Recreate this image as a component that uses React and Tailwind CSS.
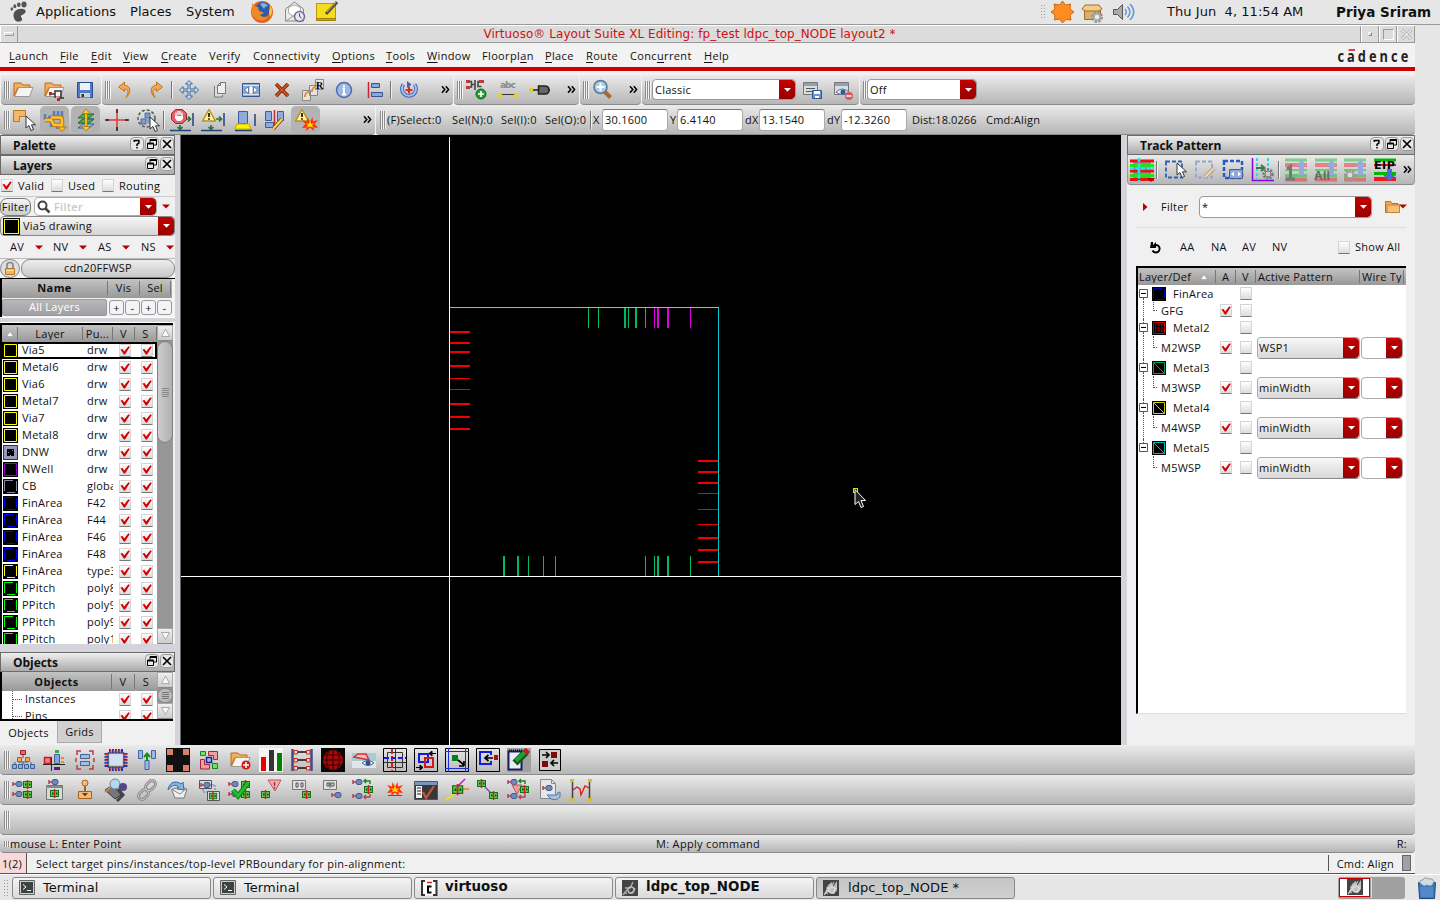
import React from "react";

/* ---------- small building blocks ---------- */

const Svg = ({ w = 24, h = 24, vb, className = "", children }) => (
  <svg width={w} height={h} viewBox={vb || `0 0 ${w} ${h}`} className={`block shrink-0 ${className}`} fill="none">
    {children}
  </svg>
);

const Grip = ({ className = "h-[18px]" }) => (
  <div className={`flex shrink-0 ${className}`}>
    <div className="w-[2px] border-r border-[#f4f4f4] bg-[#8c8c8c]" />
    <div className="w-[2px] border-r border-[#f4f4f4] bg-[#8c8c8c]" />
    <div className="w-[2px] border-r border-[#f4f4f4] bg-[#8c8c8c]" />
  </div>
);

const Slot = ({ children, pressed, className = "w-[31px]" }) => (
  <div className={`flex h-full shrink-0 items-center justify-center ${className}`}>
    {pressed ? (
      <div className="flex h-[28px] w-[29px] items-center justify-center rounded-[5px] bg-[#b3b3b3]">{children}</div>
    ) : (
      children
    )}
  </div>
);

const Sep = ({ className = "" }) => <div className={`h-[18px] w-[2px] shrink-0 border-r border-[#eee] bg-[#777] ${className}`} />;

const More = ({ className = "" }) => (
  <Svg w={9} h={9} className={className}>
    <path d="M1 1.2 3.8 4.5 1 7.8M4.8 1.2 7.6 4.5 4.8 7.8" stroke="#000" strokeWidth="1.5" />
  </Svg>
);

const Bar = ({ className = "", children }) => (
  <div
    className={`flex shrink-0 items-center rounded-b-[4px] border-b border-[#8a8a8a] bg-gradient-to-b from-[#ebebeb] to-[#b6b6b6] ${className}`}
  >
    {children}
  </div>
);

const RedDrop = ({ className = "w-4" }) => (
  <div className={`flex h-full shrink-0 items-center justify-center rounded-r-[4px] bg-gradient-to-b from-[#c40000] to-[#980000] ${className}`}>
    <Svg w={9} h={6}>
      <path d="M1 1h7L4.5 4.8z" fill="#fff" />
    </Svg>
  </div>
);

const RedTri = () => (
  <Svg w={8} h={5}>
    <path d="M0 .5h8L4 4.5z" fill="#b80000" />
  </Svg>
);

const Combo = ({ text, className = "", dropClass }) => (
  <div className={`flex shrink-0 items-center justify-between overflow-hidden rounded-[4px] border border-[#9a9a9a] ${className}`}>
    <span className="pl-[2px]">{text}</span>
    <RedDrop className={dropClass} />
  </div>
);

const Check = ({ on }) => (
  <div className="h-[13px] w-[12px] shrink-0 rounded-[1px] border border-[#d4d4d4] border-b-[#777] bg-gradient-to-b from-white to-[#dcdcdc]">
    {on && (
      <Svg w={10} h={11}>
        <path d="M.5 4.5 2.5 4l1.7 2.6L8.4 1.2 9.8 2 5 9.600H3.8z" fill="#d40000" />
      </Svg>
    )}
  </div>
);

const TitleBtn = ({ kind }) => (
  <div className="flex h-[14px] w-[14px] items-center justify-center rounded-[4px] border border-[#999] bg-[#e8e8e8]">
    <Svg w={12} h={12}>
      {kind === "help" && (
        <g stroke="#000" strokeWidth="1.5">
          <path d="M3.300 4V2.500h4.600v2.600L6 6.400V8" />
          <path d="M6 9v1.500" />
        </g>
      )}
      {kind === "float" && (
        <g stroke="#000">
          <path d="M4 4.500V1.500h6.500v5.500H8" />
          <path d="M4 2h6.500M1.500 5.500h6" strokeWidth="2" />
          <path d="M1.500 5v5.500h6V5" />
        </g>
      )}
      {kind === "close" && <path d="M2 2l8 8M10 2l-8 8" stroke="#000" strokeWidth="1.700" />}
    </Svg>
  </div>
);

const DockTitle = ({ text, help }) => (
  <div className="flex h-5 shrink-0 items-center border border-[#6b6b6b] bg-gradient-to-b from-[#f0f0f0] to-[#ababab] pl-3">
    <span className="grow pt-px text-[12px] font-bold tracking-[-0.050px]">{text}</span>
    <div className="-mt-[3px] flex gap-[1px]">
      {help && <TitleBtn kind="help" />}
      <TitleBtn kind="float" />
      <TitleBtn kind="close" />
    </div>
  </div>
);

/* ---------- icon pieces ---------- */

const Folder = ({ children }) => (
  <Svg>
    <path d="M3 18V5h7l2 2h7v3" fill="#f0b060" stroke="#c06a18" />
    <path d="M3.500 18.500 7.500 9.500H22l-3.500 9z" fill="#f6f4f0" stroke="#999" />
    <path d="M3 18 7 9.500" stroke="#d07a20" strokeWidth="1.500" />
    {children}
  </Svg>
);
const Floppy = ({ w = 24 }) => (
  <Svg w={w} h={w} vb="0 0 24 24">
    <path d="M4.500 4.500h15v15h-15z" fill="#4f7cc8" stroke="#274b94" />
    <path d="M7 5h10v7H7z" fill="#eef2f8" />
    <path d="M7 15h10v4.500H7z" fill="#ccd4e0" />
    <path d="M8.500 16h2.500v3H8.500z" fill="#333" />
  </Svg>
);
const Cursor = ({ x = 12, y = 9 }) => (
  <path transform={`translate(${x} ${y})`} d="M0 0v12l3-2.500 2 5 2.500-1-2-4.700h4z" fill="#fff" stroke="#333" />
);
const Pin = ({ x, y }) => (
  <g transform={`translate(${x} ${y})`}>
    <path d="M0 1v4M0 3h3" stroke="#b84050" strokeWidth="1.500" />
    <rect x="3" y=".5" width="6" height="5" rx="2" fill="#7088b8" stroke="#44598a" />
  </g>
);
const Cell = ({ x, y, s = 1 }) => (
  <g transform={`translate(${x} ${y}) scale(${s})`}>
    <rect x=".5" y="1.500" width="8" height="6" fill="#58d048" stroke="#157018" />
    <path d="M4.500 0v9" stroke="#d02020" strokeWidth="1.500" />
    <path d="M2 4.500h1.500M6 4.500h1.500" stroke="#105010" strokeWidth="2" />
  </g>
);
const Warn = ({ x = 0, y = 0 }) => (
  <g transform={`translate(${x} ${y})`}>
    <path d="M8 1.500 14.500 13h-13z" fill="#fff0a0" stroke="#b99018" strokeWidth="1.500" strokeLinejoin="round" />
    <path d="M8 5v4M8 10.200v1.600" stroke="#111" strokeWidth="1.700" />
  </g>
);
const Burst = ({ x = 0, y = 0 }) => (
  <g transform={`translate(${x} ${y})`}>
    <path d="M8 6 5.500 1 5 5.500 0 4l3.500 4L0 12l4.500-.500L4 15l4-3.500 4 3.500-.500-3.500L16 12l-3.500-4L16 4l-5 1.500L10.500 1z" fill="#ff3000" />
    <path d="M8 7 7 5v3L4 7l2 2.500-2 2 4-1 4 1-2-2L12 7 9 8V5z" fill="#ffd800" />
  </g>
);

/* ---------- toolbar icons ---------- */

const I = {
  open: <Folder />,
  openPin: (
    <Folder>
      <path d="M9 16h4v-3h6v7M13 13v7M17 20h5M8 14.500v3" stroke="#333" strokeWidth="1.500" />
      <path d="M7 14h3v3H7zM15 20h3v3h-3z" fill="#cc2020" />
    </Folder>
  ),
  save: <Floppy />,
  undo: (
    <Svg>
      <path d="m11.500 4-6 5 6 4.500V11c4 0 4.500 3 1.500 8.500C18.500 15 18 7.500 11.500 7.200z" fill="#f0a858" stroke="#c47418" />
    </Svg>
  ),
  redo: (
    <Svg>
      <path d="m12.500 4 6 5-6 4.500V11c-4 0-4.500 3-1.500 8.500C5.500 15 6 7.500 12.500 7.200z" fill="#f0a858" stroke="#c47418" />
    </Svg>
  ),
  move: (
    <Svg>
      <path
        d="M12 2.500 15.500 6H13v5h5V8.500l3.500 3.500-3.500 3.500V13h-5v5h2.500L12 21.500 8.500 18H11v-5H6v2.500L2.500 12 6 8.500V11h5V6H8.500z"
        fill="#c8dcf0"
        stroke="#3d6b9c"
      />
    </Svg>
  ),
  copy: (
    <Svg>
      <path d="M6.500 8v11h8v-2" stroke="#777" fill="#ddd" />
      <path d="M12.500 4.500h5v11h-8v-8z" fill="#eee" stroke="#777" />
      <path d="M9.500 7.500h3v-3" stroke="#777" />
    </Svg>
  ),
  stretch: (
    <Svg>
      <path d="M3.500 5.500h17v13h-17z" fill="#8ba9d8" stroke="#36568f" />
      <path d="M4 7.500h16M4 16.500h16" stroke="#dbe6f5" />
      <path d="M5.500 12 9.500 8.500v7zM18.500 12l-4-3.500v7z" fill="#fff" stroke="#36568f" strokeWidth=".7" />
      <rect x="10.500" y="8.500" width="3" height="7" fill="#fff" />
    </Svg>
  ),
  del: (
    <Svg>
      <path d="m6 6 12 12M18 6 6 18" stroke="#7c2408" strokeWidth="3.600" />
      <path d="m6 6 12 12M18 6 6 18" stroke="#d8581c" strokeWidth="1.700" />
    </Svg>
  ),
  copies: (
    <Svg>
      <path d="M1.500 12.500h8v10h-8zM8.500 7.500h8v10h-8zM14.500 1.500h8v10h-8z" fill="#e4e4e4" stroke="#888" />
      <path d="M4 19c0-4 1-5 4-5M11 14c0-4 1-5 4-5" stroke="#e08c38" strokeWidth="2" />
      <text x="15" y="10.500" fontSize="10" fontWeight="700" fill="#000" fontFamily="Liberation Serif">R</text>
    </Svg>
  ),
  info: (
    <Svg>
      <circle cx="12" cy="12" r="7.500" fill="#9db8e2" stroke="#4d6fae" strokeWidth="1.500" />
      <path d="M12 7v2M10.500 10.500H12v6M10 16.500h4" stroke="#fff" strokeWidth="2" />
    </Svg>
  ),
  align: (
    <Svg>
      <path d="M5.500 4v16" stroke="#d02030" strokeWidth="1.500" />
      <path d="M8.500 5.500h8v4h-8zM8.500 14.500h11v4h-11z" fill="#87a8dc" stroke="#34548f" />
    </Svg>
  ),
  rotate: (
    <Svg>
      <path d="M6.500 6.500a7 7 0 1 0 11 0" stroke="#3f66b0" strokeWidth="4" />
      <path d="M6.500 6.500a7 7 0 1 0 11 0" stroke="#a3c0ea" strokeWidth="2" />
      <path d="m10 3 4.500 3.500L10 10z" fill="#3f66b0" />
      <path d="M12 8.500v7M8.500 12h7" stroke="#e02828" strokeWidth="2" />
    </Svg>
  ),
  nets: (
    <Svg>
      <path d="M4 3.500h3.500V9H4M7.500 6.500H11M11 2v10M17.500 3.500H14v5h3.500" stroke="#444" strokeWidth="1.600" />
      <path d="M2 2h4v3H2zM2 8h4v3H2zM15 2h5v3h-5z" fill="#c03838" />
      <circle cx="17" cy="16" r="5" fill="#20a030" stroke="#0a6a18" />
      <path d="M17 13v6M14 16h6" stroke="#fff" strokeWidth="1.700" />
    </Svg>
  ),
  label: (
    <Svg>
      <text x="4" y="10" fontSize="9" fontWeight="700" fill="#888" fontFamily="DejaVu Sans" textLength="16">abc</text>
      <path d="M4 16.500h17" stroke="#333" />
      <path d="M2 15h4v4H2zM18 15h4v4h-4z" fill="#e8d020" />
    </Svg>
  ),
  plug: (
    <Svg>
      <path d="M2 12h10M18 12h4" stroke="#222" strokeWidth="1.500" />
      <path d="M1 10h4v4H1z" fill="#e8d020" />
      <path d="M10.500 8H17q4 0 4 4t-4 4h-6.500z" fill="#666" stroke="#222" strokeWidth="1.500" />
    </Svg>
  ),
  zoomIn: (
    <Svg>
      <path d="m13.500 13.500 6 6" stroke="#b06a20" strokeWidth="4" />
      <circle cx="9.500" cy="9" r="6.500" fill="#a8cce8" stroke="#5c7894" strokeWidth="1.500" />
      <path d="M9.500 5v8M5.500 9h8" stroke="#fff" strokeWidth="2" />
    </Svg>
  ),
  saveView: (
    <Svg>
      <path d="M3.500 4.500h14v12h-14z" fill="#ddd" stroke="#777" />
      <path d="M4 6.500h13" stroke="#8da4b8" strokeWidth="3" />
      <path d="M6 10.500h9M6 13.500h6" stroke="#555" />
      <path d="M12.500 12.500h9v8h-9z" fill="#6a94d0" stroke="#345590" />
      <path d="M14 13h6v3h-6zM15 18h4v2h-4z" fill="#fff" />
    </Svg>
  ),
  hideView: (
    <Svg>
      <path d="M3.500 4.500h14v12h-14z" fill="#ddd" stroke="#777" />
      <path d="M4 6.500h13" stroke="#8da4b8" strokeWidth="3" />
      <path d="M5 14q6-6 13 0-7 5-13 0z" fill="#dfe8f5" stroke="#5878a8" />
      <circle cx="12" cy="14" r="2.500" fill="#35588f" />
      <circle cx="18" cy="18" r="4" fill="#dc5858" />
      <path d="M15.500 18h5" stroke="#fff" strokeWidth="1.500" />
    </Svg>
  ),
  partial: (
    <Svg>
      <path d="M1.500 2.500h12v6h-6v5h-6z" fill="#f4b868" stroke="#b87820" />
      <Cursor x={14} y={8} />
    </Svg>
  ),
  route: (
    <Svg>
      <path d="M2 6v6M5 9h14M11 3v9M15 3v9M19 3v7M8 12v7M14 16v5" stroke="#5a7cc0" strokeWidth="2.500" />
      <path d="M2 12h6l3 5h7v4" stroke="#b07808" strokeWidth="4.500" />
      <path d="M8 9.500h9q2 0 2 3v8" stroke="#b07808" strokeWidth="4.500" />
      <path d="M8 9.500h9q2 0 2 3v8" stroke="#ffc038" strokeWidth="2.500" />
      <path d="M2 12h6l3 5h7v4" stroke="#ffc038" strokeWidth="2.500" />
      <path d="M14.500 19h9L19 23.500z" fill="#ffb820" stroke="#b07808" />
    </Svg>
  ),
  layersUp: (
    <Svg>
      <path d="M4 20l5-4h11l-5 4zM4 15l5-4h11l-5 4z" fill="#9cc0ee" stroke="#2f5c9c" />
      <path d="M4 15l5-4h11l-5 4zM4 10l5-4h11l-5 4z" fill="#58a850" stroke="#1d6e30" />
      <path d="M12 4v16" stroke="#a87800" strokeWidth="3" />
      <path d="M12 4v16" stroke="#ffd030" strokeWidth="1.500" />
      <path d="m12 1 4 4.500H8zM12 23l4-4.500H8z" fill="#ffc830" stroke="#a87800" strokeWidth=".8" />
    </Svg>
  ),
  cross: (
    <Svg>
      <path d="M12 2v20M1 12h22" stroke="#e03838" strokeWidth="1.500" />
      <path d="M12 1v4M12 19v4M0 12h4M20 12h4" stroke="#222" strokeWidth="1.500" />
    </Svg>
  ),
  areaSel: (
    <Svg>
      <circle cx="10.500" cy="10.500" r="8.500" stroke="#555" strokeWidth="1.500" strokeDasharray="3 2" />
      <path d="M9 5h5v5H9zM5 11h5v5H5z" fill="#7d9dcc" stroke="#3a5c98" strokeWidth=".8" />
      <circle cx="14" cy="13" r="3" fill="#7d9dcc" />
      <Cursor x={14} y={9} />
    </Svg>
  ),
  stop: (
    <Svg>
      <path d="M15 11h5m-2-2.500 2.500 2.500-2.500 2.500M10 17v4m-2.500-2 2.500 2.500 2.500-2.500" stroke="#287838" strokeWidth="1.700" />
      <path d="M23 5v13M0 22.500h21" stroke="#24427a" strokeWidth="1.500" />
      <path d="M5.500 1.500h7l4 4v6l-4 4h-7l-4-4v-6z" fill="#e06068" stroke="#a82028" />
      <path d="M6 8V4.500M8 7V3M10 7V3M12 8V4.500" stroke="#fff" strokeWidth="1.300" />
      <path d="M5 8h8v2.500L11 13H7L5 10z" fill="#fff" />
    </Svg>
  ),
  warnPins: (
    <Svg>
      <path d="M15 11h5m-2-2.500 2.500 2.500-2.500 2.500M10 17v4m-2.500-2 2.500 2.500 2.500-2.500" stroke="#287838" strokeWidth="1.700" />
      <path d="M23 5v13M0 22.500h21" stroke="#24427a" strokeWidth="1.500" />
      <Warn />
    </Svg>
  ),
  highlight: (
    <Svg>
      <path d="M6.500 3.500h9v12h-9z" fill="#8fabdc" stroke="#3a5ea0" />
      <path d="M5 16h12l2 5H3z" fill="#fff200" stroke="#c8a800" />
      <path d="M3 22.500h17M23 6v12" stroke="#24427a" strokeWidth="1.500" />
    </Svg>
  ),
  editBars: (
    <Svg>
      <path d="M2.500 3.500h6v9h-6zM14.500 3.500h6v9h-6zM2.500 14.500h8v5h-8z" fill="#8fabdc" stroke="#3a5ea0" />
      <path d="M11.500 2v16" stroke="#c82838" strokeWidth="1.500" />
      <path d="m10 21 9-10" stroke="#7a4d10" strokeWidth="4" />
      <path d="m10 21 9-10" stroke="#ffd860" strokeWidth="2" />
    </Svg>
  ),
  warnBurst: (
    <Svg>
      <Warn />
      <Burst x={8} y={8} />
    </Svg>
  ),
};

/* lower toolbars */
const B1 = [
  <Svg>
    <path d="M12 7v3M7 12v2h10v-2M4 16v-2M12 14v3M20 17v-3" stroke="#555" />
    <path d="M9.500 2.500h5v4h-5z" fill="#e86868" stroke="#a02020" />
    <path d="M6.500 9.500h4v4h-4zM14.500 9.500h4v4h-4z" fill="#f0a868" stroke="#a86020" />
    <path d="M1.500 16.500h4v4h-4zM7.500 16.500h4v4h-4zM13.500 16.500h4v4h-4zM19.500 16.500h4v4h-4z" fill="#90aedc" stroke="#3f5f98" />
  </Svg>,
  <Svg>
    <path d="M1 16.500h22M9.500 9v14" stroke="#222" />
    <path d="M2.500 9.500h6v6h-6z" fill="#f08080" stroke="#c02020" strokeWidth="1.500" />
    <path d="M12.500 6.500h5v9h-5z" fill="#88a4d4" stroke="#44609c" />
    <path d="M13 2h4v3h-4z" fill="#30b040" />
    <path d="M19 9h3v2h-3zM19 13h3v2h-3z" fill="#e89020" />
    <path d="M12 19h6v3h-6z" fill="#601098" />
  </Svg>,
  <Svg>
    <path d="M4 7V3h4M16 3h4v4M20 17v4h-4M8 21H4v-4M3 10v4M21 10v4" stroke="#c03848" strokeWidth="1.500" />
    <path d="M7.500 6.500h9v4h-9zM7.500 13.500h9v4h-9z" fill="#a5bce2" stroke="#44609c" />
  </Svg>,
  <Svg>
    <rect x="4" y="5" width="16" height="14" stroke="#222" />
    <rect x="6" y="7" width="12" height="10" fill="#d2e0f4" />
    <path d="M5 3h14M5 21h14" stroke="#2038b0" strokeWidth="4" strokeDasharray="2 1" />
    <path d="M2.500 5v14M21.500 5v14" stroke="#2038b0" strokeWidth="4" strokeDasharray="2 1" />
    <path d="M6 3h12M6 21h12M2.500 6v12M21.500 6v12" stroke="#e83838" strokeWidth="2.500" strokeDasharray="1.500 1.500" />
  </Svg>,
  <Svg>
    <path d="M3.500 2.500h4v8h-4zM16.500 2.500h4v8h-4zM10 12.500h4v9h-4z" fill="#9db8e4" stroke="#3f63a8" />
    <path d="M12 13V6m-3 3 3-3.500L15 9" stroke="#159020" strokeWidth="2" />
  </Svg>,
  <Svg>
    <path d="M0 0h24v24H0z" fill="#111" />
    <path d="M1 1h6v6H1zM17 1h6v6h-6zM1 17h6v6H1zM17 17h6v6h-6z" fill="#d87f68" />
  </Svg>,
  <Svg>
    <path d="M3.500 3.500h5v4h-5z" fill="#70e060" stroke="#208020" />
    <path d="M15.500 15.500h5v5h-5z" fill="#70e060" stroke="#208020" />
    <path d="M11.500 3.500h9v8h-4v-4h-5zM3.500 11.500h4v5h5v4.500h-9z" fill="#e8a0a0" stroke="#b02038" />
    <path d="M9.500 9.500h5v5h-5z" fill="#a8b8f0" stroke="#182090" strokeWidth="1.500" />
  </Svg>,
  <Folder>
    <circle cx="18" cy="17" r="4.500" fill="#d01818" />
    <path d="M18 14v6M15 17h6" stroke="#fff" strokeWidth="1.500" />
  </Folder>,
  <Svg>
    <path d="M0 0h24v24H0z" fill="#f4f4f4" />
    <path d="M2 9h5v14H2z" fill="#e80000" />
    <path d="M10 2h5v21h-5z" fill="#333" />
    <path d="M18 5h5v18h-5z" fill="#008000" />
  </Svg>,
  <Svg>
    <path d="M2.500 1v22M21.500 1v22" stroke="#3c4c90" strokeWidth="2.500" />
    <path d="M5 4h14M5 12h14M5 20h14" stroke="#111" strokeWidth="1.500" />
    <path d="M4 2.500h3.500v3.500H4zM4 10.500h3.500v3.500H4zM4 18.500h3.500v3.500H4zM16.500 2.500h3.500v3.500h-3.500zM16.500 10.500h3.500v3.500h-3.500zM16.500 18.500h3.500v3.500h-3.500z" fill="#f8d8c8" stroke="#d02818" />
  </Svg>,
  <Svg>
    <path d="M0 0h24v24H0z" fill="#080808" />
    <circle cx="12" cy="12" r="10" fill="#a80808" />
    <path d="M2 12h20M3.500 7h17M3.500 17h17M12 2v20M8 2.500Q3 12 8 21.500M16 2.500q5 9.500 0 19" stroke="#300" />
  </Svg>,
  <Svg>
    <path d="M0 5h24v15H0z" fill="#a8ccd6" />
    <path d="M0 13h24v7H0z" fill="#dfe8e6" />
    <path d="M6 6h8l3 6L2 9z" stroke="#d83030" strokeWidth="1.500" fill="#f0c0c0" />
    <path d="M10 15q6-5 12 0-6 5-12 0z" fill="#f2f6fb" stroke="#456898" />
    <circle cx="16" cy="15" r="2.500" fill="#2f4f90" />
  </Svg>,
  <Svg>
    <path d="M.5.5h23v23H.5z" stroke="#000" />
    <path d="M4.500 4.500h15v15h-15zM12.500 1v22M1 14.500h22" stroke="#333" />
    <path d="M9 1v22" stroke="#e01818" strokeWidth="2" strokeDasharray="5 2" />
    <path d="M1 10h22" stroke="#1818e0" strokeWidth="2" strokeDasharray="5 2" />
  </Svg>,
  <Svg>
    <path d="M.5.5h23v23H.5z" stroke="#000" />
    <path d="M5 6h9v8H5z" stroke="#1818d0" strokeWidth="2" />
    <path d="M11 10h8v9h-8z" stroke="#d01818" strokeWidth="2" />
    <path d="M15 5.500h7m-7 0 3-2.500v5zM2 19.500h7m0 0-3-2.500v5z" stroke="#000" fill="#000" />
  </Svg>,
  <Svg>
    <path d="M.5.5h23v23H.5z" stroke="#000" />
    <path d="M3.500 0v24M20.500 0v24M0 3.500h24M0 20.500h24" stroke="#2030d0" />
    <path d="M7 7h6v6H7z" fill="#008020" />
    <path d="m13 12 6 5m0 1h-5m5 0v-5" stroke="#000" strokeWidth="1.700" />
  </Svg>,
  <Svg>
    <path d="M.5.5h23v23H.5z" stroke="#000" />
    <path d="M15 7V4H4v12h11v-3" stroke="#1020d8" strokeWidth="2" />
    <path d="M9 10h8M12.500 7 9 10l3.500 3" stroke="#000" strokeWidth="1.700" />
    <path d="M18 7h4v5h-4z" fill="#c00810" />
  </Svg>,
  <Svg>
    <path d="M0 0h24v24H0z" fill="#a0a0a0" />
    <path d="M1.500 3.500h13v18h-13z" fill="#e8eef4" stroke="#18205c" strokeWidth="2" />
    <path d="M2 2.500h13" stroke="#111" strokeWidth="2" strokeDasharray="1 1" />
    <path d="m8 15 11-11" stroke="#0a5a18" strokeWidth="7" />
    <path d="m9 13 9-9" stroke="#22a038" strokeWidth="4" />
    <path d="m18 5 3-3" stroke="#d01818" strokeWidth="6" />
  </Svg>,
  <Svg>
    <path d="M1.500 1.500h21v21h-21z" stroke="#000" fill="#ccc" />
    <path d="M13 4h6v6h-6zM4 13h6v6H4z" fill="#7c0a0a" />
    <path d="M4 7h7M8 4l3 3-3 3M20 15h-7m3-3-3 3 3 3" stroke="#000" strokeWidth="1.600" />
  </Svg>,
];

const B2 = [
  <Svg><Pin x={2} y={3} /><Pin x={2} y={13} /><Cell x={12} y={2} /><Cell x={12} y={12} /></Svg>,
  <Svg><path d="M4.500 7.500h16v14h-16z" fill="#d8d8d8" stroke="#777" /><path d="M4 9h16" stroke="#888" strokeWidth="2" /><Pin x={7} y={1} /><Cell x={8} y={11} /></Svg>,
  <Svg><circle cx="12" cy="5" r="3" fill="#f4c080" stroke="#a86020" /><path d="M12 8v5" stroke="#a86020" strokeWidth="2" /><path d="M5.500 13.500h13v7h-13z" fill="#f2bc78" stroke="#a86020" /><path d="M9 15h6l-3 3.500z" fill="#704008" /></Svg>,
  <Svg><path d="m1 12 8-5 8 10-6 4z" fill="#777" stroke="#333" /><path d="m14 11 5 6-6 6" stroke="#444" strokeWidth="3" /><circle cx="11" cy="6" r="5" fill="#b8d8f0" stroke="#6888a8" /><circle cx="19" cy="9" r="4" fill="#504888" /><path d="m1 14 6-5" stroke="#c08848" strokeWidth="2" /></Svg>,
  <Svg><g stroke="#888" strokeWidth="3"><rect x="10" y="4" width="11" height="7" rx="3.500" transform="rotate(-45 15.500 7.500)" /><rect x="3" y="13" width="11" height="7" rx="3.500" transform="rotate(-45 8.500 16.500)" /></g><g stroke="#c4c4c4"><rect x="10" y="4" width="11" height="7" rx="3.500" transform="rotate(-45 15.500 7.500)" /><rect x="3" y="13" width="11" height="7" rx="3.500" transform="rotate(-45 8.500 16.500)" /></g></Svg>,
  <Svg><path d="M5.500 11.500 16 8.500l5 3-3 8.500H9z" fill="#eee" stroke="#777" /><path d="m6 11.500 8 4.500 6-5" stroke="#888" /><path d="M2 12C3 4 10 2 15 6l2-2 1 8-7-1 2-2C9 6 6 7 2 12z" fill="#88b4e4" stroke="#3a6ca8" /></Svg>,
  <Svg><path d="M2.500 2.500h12v8h-12z" fill="#d5dbe5" stroke="#555" /><path d="M6 11v3h11v7M9 7h9v7" stroke="#6080a8" strokeDasharray="2 1" /><Pin x={4} y={4} /><path d="M10.500 13.500h12v9h-12z" stroke="#555" fill="#d5dbe5" /><Cell x={12} y={14} s={0.9} /></Svg>,
  <Svg><Pin x={1} y={3} /><Pin x={1} y={13} /><Cell x={13} y={2} /><Cell x={13} y={12} /><path d="m5 12 5 6L20 5" stroke="#0c7a10" strokeWidth="5" /><path d="m5 12 5 6L20 5" stroke="#20c028" strokeWidth="3" /></Svg>,
  <Svg><path d="M9 2h13l-6 11z" fill="#f0b0b0" stroke="#c05058" /><path d="M15.500 4v4M15.500 9v1.500" stroke="#b03038" strokeWidth="1.500" /><Cell x={2} y={12} /></Svg>,
  <Svg><path d="M2.500 2.500h13v9h-13z" fill="#e0e0e0" stroke="#777" /><path d="M6 5h2v4H6zM11 5h2v4h-2z" stroke="#555" /><Cell x={12} y={12} /></Svg>,
  <Svg><path d="M2.500 2.500h13v9h-13z" fill="#e0e0e0" stroke="#777" /><path d="M9 4v6M6 5h2v3H6zM10 5h3v3h-3z" stroke="#555" /><Pin x={11} y={14} /></Svg>,
  <Svg><Pin x={1} y={1} /><Pin x={1} y={15} /><Cell x={12} y={7} /><path d="M18 6V3h-6m2-2-2 2 2 2" stroke="#1c8028" strokeWidth="1.400" /><path d="M18 16v3h-6m2-2-2 2 2 2" stroke="#b84050" strokeWidth="1.400" /></Svg>,
  <Svg><path d="M5 17.500h14" stroke="#555" /><Burst x={4} y={3} /></Svg>,
  <Svg><path d="M.5 3.500h23v18H.5z" fill="#383838" stroke="#555" /><path d="M1 4h22v3H1z" fill="#7898c0" /><path d="M2 8h6v12H2z" fill="#f0f0f0" /><path d="M3 10h4M3 13h4M3 16h4" stroke="#222" /><path d="m9 14 3 6 8-12" stroke="#c85838" strokeWidth="2.200" /></Svg>,
  <Svg><path d="m12 9 8-8" stroke="#c010d0" strokeWidth="1.500" /><path d="m10 15-9 7" stroke="#f0e010" strokeWidth="2" /><path d="M17 11h7" stroke="#f08020" strokeWidth="1.500" /><Cell x={7} y={6} s={1.250} /></Svg>,
  <Svg><path d="m9 9 8 8" stroke="#9040b0" strokeWidth="1.500" /><Cell x={1} y={1} /><Cell x={13} y={13} /></Svg>,
  <Svg><Pin x={1} y={1} /><Pin x={1} y={15} /><path d="M5 7h10l-5 9z" fill="#e8a0a0" stroke="#c05058" /><Cell x={13} y={7} /><path d="M18 6V3h-6m2-2-2 2 2 2" stroke="#1c8028" strokeWidth="1.400" /><path d="M18 16v3h-6m2-2-2 2 2 2" stroke="#b84050" strokeWidth="1.400" /></Svg>,
  <Svg><path d="M2.500 1.500h11l4 4v15h-15z" fill="#e4e6ea" stroke="#888" /><path d="M13.500 1.500v4h4" stroke="#888" /><Pin x={5} y={7} /><path d="M9 17h10q0-3 3-3v5q-3 4-9 2z" fill="#a8c0e0" stroke="#5878a8" /></Svg>,
  <Svg><path d="M3.500 2v20M20.500 2v20" stroke="#444" strokeWidth="1.500" /><path d="m4 12 4-3 3 2 1 6 4-9 4 2" stroke="#e01818" strokeWidth="1.300" /><path d="M1 1h4v3H1zM19 1h4v3h-4zM1 20h4v3H1zM19 20h4v3h-4z" fill="#d8c020" /></Svg>,
];

/* ---------- top desktop panel ---------- */

const DesktopPanel = () => (
  <div className="flex h-[25px] shrink-0 items-center border-b border-[#999] bg-[#e6e6e6] font-['DejaVu_Sans',sans-serif] text-[13px] tracking-[0.050px]">
    <div className="flex w-9 shrink-0 pl-[9px]">
      <Svg w={20} h={22}>
        <ellipse cx="15" cy="3.500" rx="2.600" ry="3" fill="#555" />
        <ellipse cx="9.800" cy="3.800" rx="1.800" ry="2.200" fill="#555" />
        <ellipse cx="5.800" cy="5.300" rx="1.500" ry="2" fill="#555" />
        <ellipse cx="2.800" cy="8" rx="1.300" ry="1.700" fill="#555" />
        <path d="M14 8c5 1 2 5-1 6s1 3 0 5-7 3-8-2C3 12 7 7 14 8z" fill="#4c5050" />
      </Svg>
    </div>
    <span className="w-[94px] shrink-0 pb-px">Applications</span>
    <span className="w-[56px] shrink-0 pb-px">Places</span>
    <span className="w-[64px] shrink-0 pb-px">System</span>
    <Svg>
      <circle cx="12" cy="12" r="11" fill="#e0641c" />
      <circle cx="13" cy="9.500" r="7.500" fill="#2c5ca8" />
      <path d="M10 4q5-3 8 2-3 0-4 3z" fill="#78b4e4" />
      <path d="M2 6q-2 9 4 13 8 4 13-3-5 3-9-1l4-2q-3-2-5-2l-1-4Q4 7 2 3z" fill="#f08828" />
      <path d="M20 5q4 6 0 12l-1-4z" fill="#ffc840" />
    </Svg>
    <div className="w-2" />
    <Svg>
      <path d="M3.500 21V9l9-7 9 7v12z" fill="#e8ebe8" stroke="#888" />
      <path d="M6.500 13V7.500l6-2.500 6 2.500V13l-6 4z" fill="#fff" stroke="#aaa" />
      <path d="m4 21 8.500-6 9 6" stroke="#999" />
      <circle cx="17.500" cy="16.500" r="5" fill="#ece4f4" stroke="#7c6894" strokeWidth="1.500" />
      <path d="M17.500 13.500v3l2 1.500" stroke="#444" />
    </Svg>
    <div className="w-2" />
    <Svg>
      <path d="M2.500 3.500h19v15h-19z" fill="#f4dc20" stroke="#b89808" />
      <path d="M2.500 18.500h19v2h-19z" fill="#c8a810" stroke="#9c8008" />
      <path d="m12 14 11-12" stroke="#604c30" strokeWidth="3" />
      <path d="m13 12 9-10" stroke="#c8b088" strokeWidth="1" />
    </Svg>
    <div className="grow" />
    <div className="mr-[5px] h-4 w-[6px] bg-[radial-gradient(circle,#999_1px,transparent_1px)] bg-[size:3px_3px]" />
    <Svg w={23} h={22} className="mr-[7px]">
      <path d="m11.500 0 3 4 5-1-.500 5 4 3-4 3 1 5-5-.500-3.500 3.500-3-4-5 1 .500-5L0 11l4-3-1-5 5.500 1z" fill="#ff8c20" stroke="#d06810" />
    </Svg>
    <Svg w={24} h={22} className="mr-[6px]">
      <path d="M3.500 8.500h16v10h-16z" fill="#dcb068" stroke="#98702c" />
      <path d="m1 8 3-4h14l3 4-3 2H4z" fill="#f0cc88" stroke="#98702c" />
      <circle cx="16" cy="16" r="4.500" stroke="#909090" strokeWidth="3" strokeDasharray="2.200 1.300" />
      <circle cx="16" cy="16" r="3.200" stroke="#aaa" strokeWidth="2" fill="#eee" />
    </Svg>
    <Svg w={24} h={22} className="mr-[32px]">
      <path d="M2.500 8.500h4l5-5v15l-5-5h-4z" fill="#aaa" stroke="#555" />
      <path d="M14 8q2.500 3 0 6M16.500 5.500q5 5.500 0 11M19 3q7.500 8 0 16" stroke="#6898d0" strokeWidth="1.500" />
    </Svg>
    <span className="w-[169px] shrink-0 pb-px">{"Thu Jun \u00a04, 11:54 AM"}</span>
    <span className="w-[104px] shrink-0 pb-px text-[13.500px] font-bold">Priya Sriram</span>
  </div>
);

/* ---------- window title and menus ---------- */

const WinBtn = ({ children }) => (
  <div className="flex h-full w-[18px] items-center justify-center border-l border-r border-l-white border-r-[#999]">{children}</div>
);

const TitleBar = () => (
  <div className="flex h-[18px] shrink-0 items-center border-b border-t border-b-[#999] border-t-white bg-[#dcdcdc]">
    <WinBtn>
      <div className="h-[4px] w-[10px] border border-b-[#999] border-l-white border-r-[#999] border-t-white" />
    </WinBtn>
    <div className="grow pl-[1px] text-center">
      <span className="font-['DejaVu_Sans',sans-serif] text-[12px] leading-[14px] tracking-[0.060px] text-[#d01010]">
        Virtuoso® Layout Suite XL Editing: fp_test ldpc_top_NODE layout2 *
      </span>
    </div>
    <div className="flex h-full border-l border-[#999]">
      <WinBtn>
        <div className="h-[4px] w-[4px] border border-b-[#888] border-l-white border-r-[#888] border-t-white" />
      </WinBtn>
      <WinBtn>
        <div className="h-[11px] w-[11px] border border-b-white border-l-[#999] border-r-white border-t-[#999]" />
      </WinBtn>
      <WinBtn>
        <Svg w={11} h={11}>
          <path d="m1 1 9 9M10 1l-9 9" stroke="#999" strokeWidth="3.500" strokeDasharray="1 1" />
          <path d="m1 1 9 9M10 1l-9 9" stroke="#e8e8e8" strokeWidth="1.500" />
        </Svg>
      </WinBtn>
    </div>
  </div>
);

const menus = [
  ["", "L", "aunch", "w-[51px]"],
  ["", "F", "ile", "w-[31px]"],
  ["", "E", "dit", "w-[32px]"],
  ["", "V", "iew", "w-[38px]"],
  ["", "C", "reate", "w-[48px]"],
  ["Ver", "i", "fy", "w-[44px]"],
  ["Co", "n", "nectivity", "w-[79px]"],
  ["", "O", "ptions", "w-[54px]"],
  ["", "T", "ools", "w-[41px]"],
  ["", "W", "indow", "w-[55px]"],
  ["Floorpl", "a", "n", "w-[63px]"],
  ["", "P", "lace", "w-[41px]"],
  ["", "R", "oute", "w-[44px]"],
  ["Conc", "u", "rrent", "w-[74px]"],
  ["", "H", "elp", "w-[40px]"],
];

const MenuBar = () => (
  <div className="flex h-[28px] shrink-0 items-center border-b-4 border-[#cc0000] bg-[#f2f2f2] pl-[9px]">
    {menus.map(([a, u, b, w]) => (
      <span key={a + u + b} className={`shrink-0 pt-[2px] tracking-[0.350px] ${w}`}>
        {a}
        <span className="underline underline-offset-2">{u}</span>
        {b}
      </span>
    ))}
    <div className="grow" />
    <span className="relative mr-[4px] mt-px origin-right scale-x-[0.8] text-[16px] font-bold leading-none tracking-[3.800px] text-[#222]">
      cadence
      <span className="absolute left-[14px] top-[1px] h-[2px] w-[8px] bg-[#e04040]" />
    </span>
  </div>
);

/* ---------- upper toolbars ---------- */

const TopBar1 = () => (
  <div className="flex h-[30px] shrink-0 pl-px">
    <Bar className="mr-px w-[100px] pl-[3px]">
      <Grip />
      <Slot className="w-[26px]">{I.open}</Slot>
      <Slot className="w-[35px]">{I.openPin}</Slot>
      <Slot className="w-[28px]">{I.save}</Slot>
    </Bar>
    <Bar className="mr-px w-[351px] pl-[3px]">
      <Grip className="mr-[-2px] h-[18px]" />
      <Slot>{I.undo}</Slot>
      <Slot>{I.redo}</Slot>
      <Sep />
      <Slot>{I.move}</Slot>
      <Slot>{I.copy}</Slot>
      <Slot>{I.stretch}</Slot>
      <Slot>{I.del}</Slot>
      <Slot>{I.copies}</Slot>
      <Slot>{I.info}</Slot>
      <Slot>{I.align}</Slot>
      <Sep className="mr-px" />
      <Slot>{I.rotate}</Slot>
      <More className="ml-[17px]" />
    </Bar>
    <Bar className="mr-px w-[125px] pl-[3px]">
      <Grip className="mr-[-3px] h-[18px]" />
      <Slot>{I.nets}</Slot>
      <Slot className="w-[34px]">{I.label}</Slot>
      <Slot className="w-[30px]">{I.plug}</Slot>
      <More className="ml-[12px]" />
    </Bar>
    <Bar className="mr-px w-[61px] pl-[3px]">
      <Grip />
      <Slot className="w-[28px]">{I.zoomIn}</Slot>
      <More className="ml-[12px]" />
    </Bar>
    <Bar className="mr-px w-[217px] pl-[3px]">
      <Grip className="mr-px h-[18px]" />
      <Combo text="Classic" className="h-[21px] w-[144px] bg-white" />
      <Slot>{I.saveView}</Slot>
      <Slot>{I.hideView}</Slot>
    </Bar>
    <Bar className="grow pl-[3px]">
      <Grip className="mr-[-2px] h-[18px]" />
      <Combo text="Off" className="h-[21px] w-[110px] bg-white" />
    </Bar>
  </div>
);

const Field = ({ value }) => (
  <div className="mr-[2px] flex h-[22px] w-[66px] shrink-0 items-center rounded-[3px] border border-[#aaa] border-t-[#777] bg-white pl-[2px]">
    {value}
  </div>
);

const TopBar2 = () => (
  <div className="flex h-[30px] shrink-0">
    <Bar className="w-[375px] pl-[4px]">
      <Grip className="mr-[-2px] h-[18px]" />
      <Slot>{I.partial}</Slot>
      <Slot pressed>{I.route}</Slot>
      <Slot pressed>{I.layersUp}</Slot>
      <Slot>{I.cross}</Slot>
      <Slot>{I.areaSel}</Slot>
      <Sep className="mr-px" />
      <Slot>{I.stop}</Slot>
      <Slot>{I.warnPins}</Slot>
      <Slot>{I.highlight}</Slot>
      <Slot>{I.editBars}</Slot>
      <Slot pressed>{I.warnBurst}</Slot>
      <More className="ml-[42px]" />
    </Bar>
    <Bar className="ml-px grow pl-[4px]">
      <Grip className="mr-[1px] h-[18px]" />
      <span className="w-[65px] shrink-0">(F)Select:0</span>
      <span className="w-[49px] shrink-0">Sel(N):0</span>
      <span className="w-[44px] shrink-0">Sel(I):0</span>
      <span className="w-[45px] shrink-0">Sel(O):0</span>
      <Sep />
      <span className="w-[10px] shrink-0 pl-px">X</span>
      <Field value="30.1600" />
      <span className="w-[7px] shrink-0">Y</span>
      <Field value="6.4140" />
      <span className="w-[14px] shrink-0">dX</span>
      <Field value="13.1540" />
      <span className="w-[14px] shrink-0">dY</span>
      <Field value="-12.3260" />
      <span className="w-[77px] shrink-0 pl-[3px] tracking-[0.100px]">Dist:18.0266</span>
      <span>Cmd:Align</span>
    </Bar>
  </div>
);

/* ---------- left dock ---------- */

const Swatch = ({ c, broken, dnw }) => (
  <Svg w={15} h={15}>
    <path d="M0 0h15v15H0z" fill={dnw ? "#9898b8" : "#000"} />
    {dnw ? (
      <>
        <path d="M.5.5h14v14H.5z" stroke="#333" />
        <path d="M4 4h7v7H4z" fill="#000" />
        <path d="M5 7.500h1M9 5.500h1M7 10.500h1" stroke="#9898b8" />
      </>
    ) : (
      <path d={broken ? "M1.500 12V1.500H10M13.500 2v10M4 13.500h8" : "M1.500 1.500h12v12h-12z"} stroke={c} />
    )}
  </Svg>
);

const Y = "#ffff00", BL = "#0000ff", G = "#00ff00";
const layers = [
  ["Via5", "drw", Y], ["Metal6", "drw", Y], ["Via6", "drw", Y], ["Metal7", "drw", Y], ["Via7", "drw", Y], ["Metal8", "drw", Y],
  ["DNW", "drw", "dnw"], ["NWell", "drw", "#9400d3"], ["CB", "global", "#8888a8", 1],
  ["FinArea", "F42", BL, 1], ["FinArea", "F44", BL, 1], ["FinArea", "F46", BL, 1], ["FinArea", "F48", BL, 1],
  ["FinArea", "type3", Y, 1],
  ["PPitch", "poly8", G, 1], ["PPitch", "poly9", G, 1], ["PPitch", "poly9", G, 1], ["PPitch", "poly1", G, 1],
];

const ScrollBtn = ({ up }) => (
  <div className="flex h-4 shrink-0 items-center justify-center border border-[#aaa] border-b-[#888] bg-gradient-to-b from-[#f0f0f0] to-[#ccc]">
    <Svg w={9} h={8}>
      <path d={up ? "M4.500 0 8.500 7.500h-8z" : "M4.500 7.500.5.5h8z"} fill="#f8f8f8" stroke="#aaa" />
    </Svg>
  </div>
);

const HeadCell = ({ className = "", children }) => (
  <div className={`my-[2px] flex shrink-0 items-center justify-center overflow-hidden whitespace-nowrap border-r border-[#777] ${className}`}>{children}</div>
);
const headBg = "flex shrink-0 bg-gradient-to-b from-[#c4c4c4] to-[#989898]";

const Pm = ({ t }) => (
  <div className="flex h-[15px] w-[15px] items-center justify-center rounded-[3px] border border-[#999] bg-[#f4f4f4] text-[11px] leading-none">{t}</div>
);

const LeftDock = () => (
  <div className="flex w-[175px] shrink-0 flex-col overflow-hidden bg-[#f0f0f0]">
    <DockTitle text="Palette" help />
    <DockTitle text="Layers" />
    <div className="flex h-[21px] shrink-0 items-center pl-px">
      <Check on />
      <span className="w-[38px] pl-[5px]">Valid</span>
      <Check />
      <span className="w-[39px] pl-[5px]">Used</span>
      <Check />
      <span className="pl-[5px]">Routing</span>
    </div>
    <div className="flex h-[20px] shrink-0 items-center border-t border-[#ccc]">
      <div className="flex h-[18px] w-[31px] items-center justify-center whitespace-nowrap rounded-[7px] border border-[#777] bg-gradient-to-b from-[#f4f4f4] to-[#ccc]">Filter</div>
      <div className="ml-[3px] flex h-[19px] w-[123px] items-center overflow-hidden rounded-[5px] border border-[#aaa] bg-white">
        <Svg w={18} h={16}>
          <circle cx="7.500" cy="6.500" r="4" stroke="#444" strokeWidth="2" />
          <path d="m10.500 9.500 4 4" stroke="#444" strokeWidth="2.500" />
        </Svg>
        <span className="grow pl-px font-semibold text-[#c8c8c8]">Filter</span>
        <RedDrop />
      </div>
      <div className="pl-[5px]"><RedTri /></div>
    </div>
    <div className="flex h-[20px] shrink-0 items-center overflow-hidden rounded-[4px] border border-[#888] bg-gradient-to-b from-[#f6f6f6] to-[#d4d4d4] pl-[2px]">
      <div className="h-[17px] w-[17px] border border-black bg-[#ff0] p-px"><div className="h-full w-full bg-black" /></div>
      <span className="grow pl-[3px]">Via5 drawing</span>
      <RedDrop />
    </div>
    <div className="flex h-[22px] shrink-0 items-center pl-[10px]">
      <span className="w-[25px]">AV</span><RedTri />
      <span className="w-[36px] pl-[10px]">NV</span><RedTri />
      <span className="w-[35px] pl-[11px]">AS</span><RedTri />
      <span className="w-[36px] pl-[11px]">NS</span><RedTri />
    </div>
    <div className="flex h-[20px] shrink-0 items-center gap-px border-t border-[#bbb]">
      <div className="flex h-[19px] w-[20px] items-center justify-center rounded-full border border-[#888] bg-[#ddd]">
        <Svg w={14} h={15}>
          <path d="M4 7V4q0-2.500 3-2.500T10 4v3" stroke="#888" strokeWidth="1.700" />
          <path d="M2.500 7.500h9v6h-9z" fill="#f4b460" stroke="#b87828" />
          <path d="M3 9.500h8" stroke="#ffe0a8" />
        </Svg>
      </div>
      <div className="flex h-[19px] grow items-center justify-center rounded-[9px] border border-[#888] bg-gradient-to-b from-[#eee] to-[#c8c8c8] pb-px">cdn20FFWSP</div>
    </div>
    <div className="flex h-[39px] shrink-0 flex-col border-l-2 border-t border-black bg-[#f4f4f4]">
      <div className={`${headBg} mr-[3px] h-[19px] pb-px`}>
        <HeadCell className="w-[106px] font-bold tracking-[0.400px]">Name</HeadCell>
        <HeadCell className="w-[32px]">Vis</HeadCell>
        <HeadCell className="w-[31px]">Sel</HeadCell>
      </div>
      <div className="flex grow items-center gap-px pb-px">
        <div className="mr-px flex h-[17px] w-[105px] items-center justify-center rounded-[2px] border border-[#999] bg-gradient-to-b from-[#b8b8b8] to-[#a0a0a4] text-white">All Layers</div>
        <Pm t="+" /><Pm t="-" /><Pm t="+" /><Pm t="-" />
      </div>
    </div>
    <div className="h-[6px] shrink-0 border-y border-white bg-[#d4d4da]" />
    <div className="mr-[2px] flex h-[321px] shrink-0 overflow-hidden border-l-2 border-t-2 border-black bg-white">
      <div className="w-[155px] shrink-0">
        <div className={`${headBg} h-[17px]`}>
          <HeadCell className="w-[16px]"><Svg w={8} h={6}><path d="M4 .5 7.500 5.500h-7z" fill="#fff" stroke="#888" strokeWidth=".5" /></Svg></HeadCell>
          <HeadCell className="w-[65px]">Layer</HeadCell>
          <HeadCell className="w-[30px]">Pu...</HeadCell>
          <HeadCell className="w-[22px]">V</HeadCell>
          <HeadCell className="w-[22px]">S</HeadCell>
        </div>
        {layers.map(([n, p, c, br], i) => (
          <div key={i} className={`flex h-[17px] items-center pb-px ${i === 0 ? "outline-2 -outline-offset-2 outline-black" : ""}`}>
            <div className="w-[18px] pl-px"><Swatch c={c} broken={br} dnw={c === "dnw"} /></div>
            <span className="w-[65px] shrink-0 pl-[2px]">{n}</span>
            <span className="w-[28px] shrink-0 overflow-hidden pl-[2px]">{p}</span>
            <div className="w-[22px] pl-[6px]"><Check on /></div>
            <div className="pl-[6px]"><Check on /></div>
          </div>
        ))}
      </div>
      <div className="flex grow flex-col bg-[#969696]">
        <ScrollBtn up />
        <div className="flex h-[102px] shrink-0 items-center justify-center rounded-[8px] border border-[#808080] bg-gradient-to-r from-[#ccc] to-[#b0b0b0]">
          <div className="h-[9px] w-[7px] bg-[repeating-linear-gradient(#888_0_1px,transparent_1px_2px)]" />
        </div>
        <div className="grow" />
        <ScrollBtn />
      </div>
    </div>
    <div className="h-[8px] shrink-0 bg-[#d4d4da]" />
    <DockTitle text="Objects" />
    <div className="mr-[2px] flex h-[49px] shrink-0 overflow-hidden border-b-2 border-l-2 border-black bg-white">
      <div className="w-[155px] shrink-0">
        <div className={`${headBg} h-[19px]`}>
          <HeadCell className="w-[110px] font-bold tracking-[0.400px]">Objects</HeadCell>
          <HeadCell className="w-[23px]">V</HeadCell>
          <HeadCell className="w-[22px] border-r-0">S</HeadCell>
        </div>
        {["Instances", "Pins"].map((t) => (
          <div key={t} className="flex h-[17px] items-center">
            <div className="ml-[10px] flex h-full w-[13px] shrink-0 items-center border-l border-dotted border-[#555]">
              <div className="w-[9px] border-t border-dotted border-[#555]" />
            </div>
            <span className="w-[94px] pb-[2px]">{t}</span>
            <Check on />
            <div className="pl-[10px]"><Check on /></div>
          </div>
        ))}
      </div>
      <div className="flex grow flex-col bg-[#969696]">
        <ScrollBtn up />
        <div className="flex h-[15px] shrink-0 items-center justify-center rounded-full border border-[#808080] bg-[#bbb]">
          <div className="h-[7px] w-[7px] bg-[repeating-linear-gradient(#777_0_1px,transparent_1px_2px)]" />
        </div>
        <ScrollBtn />
      </div>
    </div>
    <div className="flex grow">
      <div className="flex h-[22px] w-[58px] items-center justify-center border-r border-[#aaa] pt-[2px]">Objects</div>
      <div className="flex h-[22px] w-[44px] items-center justify-center border-b border-r border-[#aaa] bg-[#d0d0d0]">Grids</div>
    </div>
  </div>
);

/* ---------- layout canvas ---------- */

const redL = [[331, 2], [342, 2], [351, 2], [365, 2], [378, 1], [389, 1], [403, 2], [416, 2], [428, 2]];
const redR = [[460, 2], [471, 2], [482, 2], [493, 1], [509, 1], [524, 1], [537, 2], [549, 2], [561, 2]];
const topT = [[588, 1], [598, 1], [624, 2], [628, 1], [635, 2], [645, 1], [654, 1, 1], [657, 2, 1], [667, 2, 1], [690, 1, 1]];
const botT = [[503, 2], [517, 2], [528, 1], [543, 1], [555, 1], [645, 1], [654, 1], [657, 2], [667, 2], [690, 1]];

const Canvas = () => (
  <div className="w-[940px] shrink-0 bg-black pt-[2px]">
    <svg width="940" height="608" viewBox="181 137 940 608" className="block" shapeRendering="crispEdges" fill="none">
      <path d="M718.500 307v269" stroke="#00c8d0" />
      <path d="M450 307.500h269" stroke="#60d0d0" />
      {topT.map(([x, w, m]) => (
        <rect key={x} x={x} y={308} width={w} height={20} fill={m ? "#e000e0" : "#00b860"} />
      ))}
      {botT.map(([x, w]) => (
        <rect key={x} x={x} y={556} width={w} height={20} fill="#00b860" />
      ))}
      {redL.map(([y, h]) => (
        <rect key={y} x={450} y={y} width={20} height={h} fill="#f00000" />
      ))}
      {redR.map(([y, h]) => (
        <rect key={y} x={698} y={y} width={20} height={h} fill="#f00000" />
      ))}
      <path d="M449.500 137v608M181 576.500h940" stroke="#fff" />
      <path d="M853.500 488.500h4v4h-4z" stroke="#e0e000" />
      <path d="M855 489.500v15l3.500-3 2.500 6 2.500-1-2.500-6h4.500z" fill="#222" stroke="#fff" shapeRendering="auto" />
    </svg>
  </div>
);

/* ---------- right dock ---------- */

const Tracks = ({ children }) => (
  <Svg>
    <g opacity=".5">
      <path d="M1 2h22M1 17.500h22" stroke="#18c030" strokeWidth="3" />
      <path d="M1 7h22M1 21.500h22" stroke="#f03030" strokeWidth="4" />
      <path d="M1 12h22" stroke="#18c030" strokeWidth="2" />
    </g>
    <path d="m17.500 2 5.500 6h-3v9h-5V8h-3z" fill="#98aadc" />
    {children}
  </Svg>
);

const R = {
  pattern: (
    <Svg w={26} h={24}>
      <path d="M4 2h18v20H4z" fill="#5878d0" opacity=".7" />
      <path d="M1 3h24M1 13h24M1 21.500h24" stroke="#f01010" strokeWidth="3" />
      <path d="M1 7.500h24M1 17.500h24" stroke="#20e020" strokeWidth="3" />
      <path d="M1 10.500h24M10 0v24" stroke="#20e8f0" strokeWidth="2.500" strokeDasharray="4 1.500" />
      <path d="M18 20h8l-4 4z" fill="#b00000" />
    </Svg>
  ),
  select: <Svg><path d="M3 3.500h16v16H3z" stroke="#3060b8" strokeWidth="1.800" strokeDasharray="4 2" /><Cursor x={14} y={5} /></Svg>,
  edit: <Svg><path d="M3 3.500h16v16H3z" stroke="#90a8d0" strokeWidth="1.800" strokeDasharray="4 2" /><path d="m12 19 9-9" stroke="#b8a080" strokeWidth="4" /><path d="m12 19 9-9" stroke="#f0d8b0" strokeWidth="2" /></Svg>,
  region: <Svg><path d="M3 3h18v17H3z" stroke="#2858d0" strokeWidth="2.500" strokeDasharray="4 2" /><path d="M8.500 11.500h13v9h-13z" fill="#8ca8d8" stroke="#44609c" /><path d="m10 16 3-2.500v5zM20 16l-3-2.500v5z" fill="#fff" /></Svg>,
  gear: <Svg><path d="M1.500 0v22.500H23" stroke="#9000e0" strokeWidth="1.500" /><path d="M6 0v22M17 0v22" stroke="#20e0f0" strokeWidth="2" strokeDasharray="3 2" /><path d="M5 10h8m-3-3 3.500 3-3.500 3" stroke="#308048" strokeWidth="2" /><circle cx="17" cy="16" r="4.500" stroke="#777" strokeWidth="2.500" strokeDasharray="2 1.300" /><circle cx="17" cy="16" r="3" fill="#ccc" stroke="#777" /></Svg>,
};

const RCombo = ({ text }) => (
  <div className="flex h-[22px] items-center overflow-hidden rounded-[4px] border border-[#aaa] border-b-[#888]">
    <div className="flex h-full grow items-center bg-gradient-to-b from-[#f8f8f8] to-[#d8d8d8] pl-px">{text}</div>
    <RedDrop />
  </div>
);

const RSwatch = ({ c, kind }) => (
  <Svg w={14} h={14}>
    <path d="M0 0h14v14H0z" fill="#000" />
    <path d={kind === "fin" ? "M1.500 2v9M12.500 2v9M4 12.500h7M2 1.500h8" : "M1.500 1.500h11v11h-11z"} stroke={c} />
    {kind === "dots" && <path d="M3 4h8M3 7h8M3 10h8" stroke={c} strokeWidth="1.500" strokeDasharray="1.500 1.500" />}
    {kind === "diag" && <path d="m2 2 10 10" stroke={c} />}
  </Svg>
);

const defs = [
  ["FinArea", "#0000c0", "fin", "GFG", null],
  ["Metal2", "#d80000", "dots", "M2WSP", "WSP1"],
  ["Metal3", "#00a050", "diag", "M3WSP", "minWidth"],
  ["Metal4", "#d0d000", "diag", "M4WSP", "minWidth"],
  ["Metal5", "#00b8c0", "diag", "M5WSP", "minWidth"],
];

const RightDock = () => (
  <div className="flex w-[288px] shrink-0 flex-col bg-[#f0f0f0]">
    <DockTitle text="Track Pattern" help />
    <Bar className="h-[30px] border-x border-x-[#999]">
      <Slot className="w-[28px]">{R.pattern}</Slot>
      <Sep />
      <Slot className="w-[33px]">{R.select}</Slot>
      <Slot className="w-[27px]">{R.edit}</Slot>
      <Slot className="w-[29px]">{R.region}</Slot>
      <Slot className="w-[31px]">{R.gear}</Slot>
      <Sep />
      <Slot className="w-[32px]"><Tracks><path d="M3 11l3.500-2.500V21M2 21h9" stroke="#777" strokeWidth="3" /></Tracks></Slot>
      <Slot className="w-[27px]"><Tracks><text x="0" y="22" fontSize="12" fontWeight="700" fill="#666" fontFamily="Liberation Sans">All</text></Tracks></Slot>
      <Slot className="w-[31px]"><Tracks><circle cx="7" cy="17" r="4.500" stroke="#999" strokeWidth="3" strokeDasharray="2 1.300" /><circle cx="7" cy="17" r="3" stroke="#999" fill="#ddd" /></Tracks></Slot>
      <Slot className="w-[30px]">
        <Svg>
          <path d="M1 2h22M1 15.500h22" stroke="#00b800" strokeWidth="3" />
          <path d="M1 21h22" stroke="#f01818" strokeWidth="4" />
          <path d="M1 7h22" stroke="#f01818" strokeWidth="2" />
          <path d="M14 11h5v6h4l-6.500 6L10 17h4z" fill="#4070e0" />
          <text x="1" y="11" fontSize="11" fontWeight="700" fill="#000" fontFamily="DejaVu Sans" textLength="21">EIP</text>
        </Svg>
      </Slot>
      <More className="ml-[3px]" />
    </Bar>
    <div className="mx-[9px] flex h-[43px] shrink-0 items-center border-b border-[#ddd] pl-[7px] pt-[2px]">
      <Svg w={5} h={8}><path d="M0 0v8l4.500-4z" fill="#b80000" /></Svg>
      <span className="w-[51px] shrink-0 pl-[13px]">Filter</span>
      <Combo text="*" className="h-[22px] w-[173px] bg-white" />
      <Svg w={23} h={16} className="ml-[12px]">
        <path d="M1.500 13.500v-11h5l1.500 2h6v9z" fill="#f4a850" stroke="#b87020" />
        <path d="M3 13.500V6h12.500v7.500z" fill="#f8c078" stroke="#c88030" />
        <path d="M15 5.500h8l-4 4z" fill="#b80000" />
      </Svg>
    </div>
    <div className="flex h-[38px] shrink-0 items-center pl-[23px]">
      <Svg w={12} h={13}>
        <path d="M4 4h2.500a3.800 3.800 0 1 1-4 5.500" stroke="#000" strokeWidth="2" />
        <path d="M1 1h2v3l3-3v6H0z" fill="#000" />
      </Svg>
      <span className="w-[49px] pl-[18px]">AA</span>
      <span className="w-[31px]">NA</span>
      <span className="w-[30px]">AV</span>
      <span className="w-[66px]">NV</span>
      <Check />
      <span className="pl-[5px]">Show All</span>
    </div>
    <div className="ml-[9px] flex h-[448px] w-[270px] shrink-0 flex-col border-b border-l-2 border-t-2 border-black border-b-[#ddd] border-r-[#ddd] bg-white">
      <div className={`${headBg} h-[17px]`}>
        <HeadCell className="w-[78px] justify-start! gap-[9px] pl-px">Layer/Def<Svg w={8} h={6}><path d="M4 .5 7.500 5.500h-7z" fill="#fff" stroke="#888" strokeWidth=".5" /></Svg></HeadCell>
        <HeadCell className="w-[20px]">A</HeadCell>
        <HeadCell className="w-[20px]">V</HeadCell>
        <HeadCell className="w-[104px] justify-start! pl-[2px]">Active Pattern</HeadCell>
        <HeadCell className="w-[44px] justify-start! pl-[2px]">Wire Ty</HeadCell>
      </div>
      {defs.map(([n, c, k, d, p], i) => (
        <div key={n} className="flex shrink-0 flex-col">
          <div className="flex h-[17px] items-center">
            <div className="flex h-full w-[11px] shrink-0 flex-col items-center">
              <div className={`h-1 border-l border-dotted ${i ? "border-[#555]" : "border-white"}`} />
              <Svg w={9} h={9}><path d="M.5.5h8v8h-8z" fill="#fff" stroke="#555" /><path d="M2 4.500h5" stroke="#000" /></Svg>
              <div className={`h-1 border-l border-dotted ${i < 4 ? "border-[#555]" : "border-white"}`} />
            </div>
            <div className="w-[3px]" />
            <RSwatch c={c} kind={k} />
            <span className="w-[74px] pl-[7px]">{n}</span>
            <Check />
          </div>
          <div className={`flex items-center ${p ? "h-[23px]" : "h-[17px]"}`}>
            <div className="flex h-full w-[11px] shrink-0 justify-center">
              <div className={`border-l border-dotted ${i < 4 ? "border-[#555]" : "border-white"}`} />
            </div>
            <div className="mb-auto ml-[4px] mr-[4px] h-1/2 w-[4px] shrink-0 border-b border-l border-dotted border-[#555]" />
            <span className="w-[59px] shrink-0">{d}</span>
            <Check on />
            <div className="ml-[8px]"><Check /></div>
            {p && (
              <div className="flex grow gap-px pl-[5px]">
                <div className="w-[103px]"><RCombo text={p} /></div>
                <div className="flex h-[22px] w-[42px] justify-end overflow-hidden rounded-[4px] border border-[#aaa] bg-white"><RedDrop /></div>
              </div>
            )}
          </div>
        </div>
      ))}
    </div>
  </div>
);

/* ---------- bottom task bar ---------- */

const TermIcon = (
  <Svg w={16} h={15}>
    <path d="M.5.5h15v14H.5z" fill="#ccc" stroke="#666" />
    <path d="M2 2h12v11H2z" fill="#3c4440" />
    <path d="m4 4.500 3 2.500-3 2.500M8 10.500h4" stroke="#fff" />
  </Svg>
);
const Pic = ({ lit }) => (
  <Svg w={16} h={16}>
    <path d="M0 0h16v16H0z" fill="#444" />
    <path d="M1 15 6 9M3 8h5l3-6M6 12q5 3 7-4M2 12l3 2" stroke="#aaa" strokeWidth="1.500" />
    <circle cx="9" cy="10" r="3" stroke="#bbb" strokeWidth="1.300" />
    {lit && <path d="M5 5 9 2l1 5 4-6v9l-3 4-6-2-4 3 3-7z" fill="#ddd" opacity=".8" />}
  </Svg>
);
const VIcon = (
  <Svg w={17} h={16}>
    <path d="M.5.5h16v15H.5z" fill="#fff" />
    <path d="M4 1H1v14h3M12 1h3.500v14H12" stroke="#333" strokeWidth="2" />
    <path d="M10.500 6.500H7v6h3.500" stroke="#000" strokeWidth="2" />
    <path d="M6 2.500h5" stroke="#e02020" strokeWidth="1.500" />
  </Svg>
);

const tasks = [
  [TermIcon, "Terminal", "text-[13px]", "pl-[8px]"],
  [TermIcon, "Terminal", "text-[13px]", "pl-[8px]"],
  [VIcon, "virtuoso", "text-[13.400px] font-bold", "pl-[7px]"],
  [<Pic />, "ldpc_top_NODE", "text-[13.400px] font-bold", "pl-[8px]"],
  [<Pic lit />, "ldpc_top_NODE *", "text-[13px]", "pl-[9px]", true],
];

const TaskBar = () => (
  <div className="flex h-[26px] shrink-0 items-center border-t border-white bg-[#e6e6e6] pl-[3px]">
    <div className="mr-[3px] h-[18px] w-[6px] bg-[radial-gradient(circle,#999_1px,transparent_1px)] bg-[size:3px_3px]" />
    {tasks.map(([ic, t, f, g, on], i) => (
      <div
        key={i}
        className={`mr-[2px] flex h-[22px] w-[199px] shrink-0 items-center rounded-[3px] border border-[#888] pl-[6px] font-['DejaVu_Sans',sans-serif] tracking-[0.050px] ${f} ${
          on ? "bg-gradient-to-b from-[#c4c4c4] to-[#d0d0d0]" : "bg-gradient-to-b from-[#f4f4f4] to-[#dadada]"
        }`}
      >
        {ic}
        <span className={`leading-none ${on ? "" : "pb-px"} ${g}`}>{t}</span>
      </div>
    ))}
    <div className="grow" />
    <div className="mr-[12px] flex h-[22px] w-[67px] rounded-[3px] bg-[#a0a0a0] p-px">
      <div className="flex h-[19px] w-[31px] items-center justify-center border border-[#c00000] bg-white"><Pic lit /></div>
      <div className="ml-px w-px bg-[#ddd]" />
    </div>
    <Svg w={20} h={22} className="mr-[3px]">
      <path d="M1.500 5.500h17l-1 16h-15z" fill="#3c74b8" stroke="#204c88" />
      <path d="M3 6q-1-3 3-3 2-4 5-1 5-1 6 3l-3 4-4-1-3 1z" fill="#d4dde6" stroke="#8898a8" />
      <path d="M3 10h13v10H4z" fill="#6098d4" opacity=".6" />
    </Svg>
  </div>
);

export default function App() {
  return (
    <div className="flex h-[900px] w-[1440px] flex-col overflow-hidden bg-[#e6e6e6] font-['Open_Sans',sans-serif] text-[11px] leading-[14px] tracking-[0.250px] text-[#111] [&_span]:whitespace-nowrap">
      <DesktopPanel />
      <div className="flex h-[849px] w-[1415px] shrink-0 flex-col bg-[#f2f2f2]">
        <TitleBar />
        <MenuBar />
        <div className="h-1 shrink-0" />
        <TopBar1 />
        <TopBar2 />
        <div className="flex h-[610px] shrink-0 bg-[#d4d4da]">
          <LeftDock />
          <div className="w-[6px] shrink-0 border-r border-[#666]" />
          <Canvas />
          <div className="w-[6px] shrink-0 bg-[#d4d4da]" />
          <RightDock />
        </div>
        <Bar className="h-[30px] pl-[4px]">
          <Grip className="mr-[-3px] h-[18px]" />
          {B1.map((ic, i) => <Slot key={i}>{ic}</Slot>)}
        </Bar>
        <Bar className="h-[30px] pl-[4px]">
          <Grip className="mr-[-3px] h-[18px]" />
          {B2.map((ic, i) => <Slot key={i}>{ic}</Slot>)}
        </Bar>
        <Bar className="h-[30px] pl-[4px]"><Grip /></Bar>
        <Bar className="h-[18px] pl-[4px] pr-[8px]">
          <Grip className="h-[6px]" />
          <span className="w-[646px]">mouse L: Enter Point</span>
          <span className="grow tracking-[0.320px]">M: Apply command</span>
          <span>R:</span>
        </Bar>
        <div className="flex h-[21px] shrink-0 items-center border-b border-[#555] bg-[#f0f0f0]">
          <div className="flex h-full w-[27px] items-center border-r border-[#555] bg-[#f8d8d8] pl-[2px] pt-px">1(2)</div>
          <span className="grow pl-[9px] pt-[2px] tracking-[0.290px]">Select target pins/instances/top-level PRBoundary for pin-alignment:</span>
          <div className="flex h-4 items-center border-l border-[#555] pl-[8px] pt-[2px]">Cmd: Align</div>
          <div className="ml-[8px] mr-[4px] h-4 w-[9px] border border-[#666] bg-[#a0a0a6]" />
        </div>
      </div>
      <TaskBar />
    </div>
  );
}
